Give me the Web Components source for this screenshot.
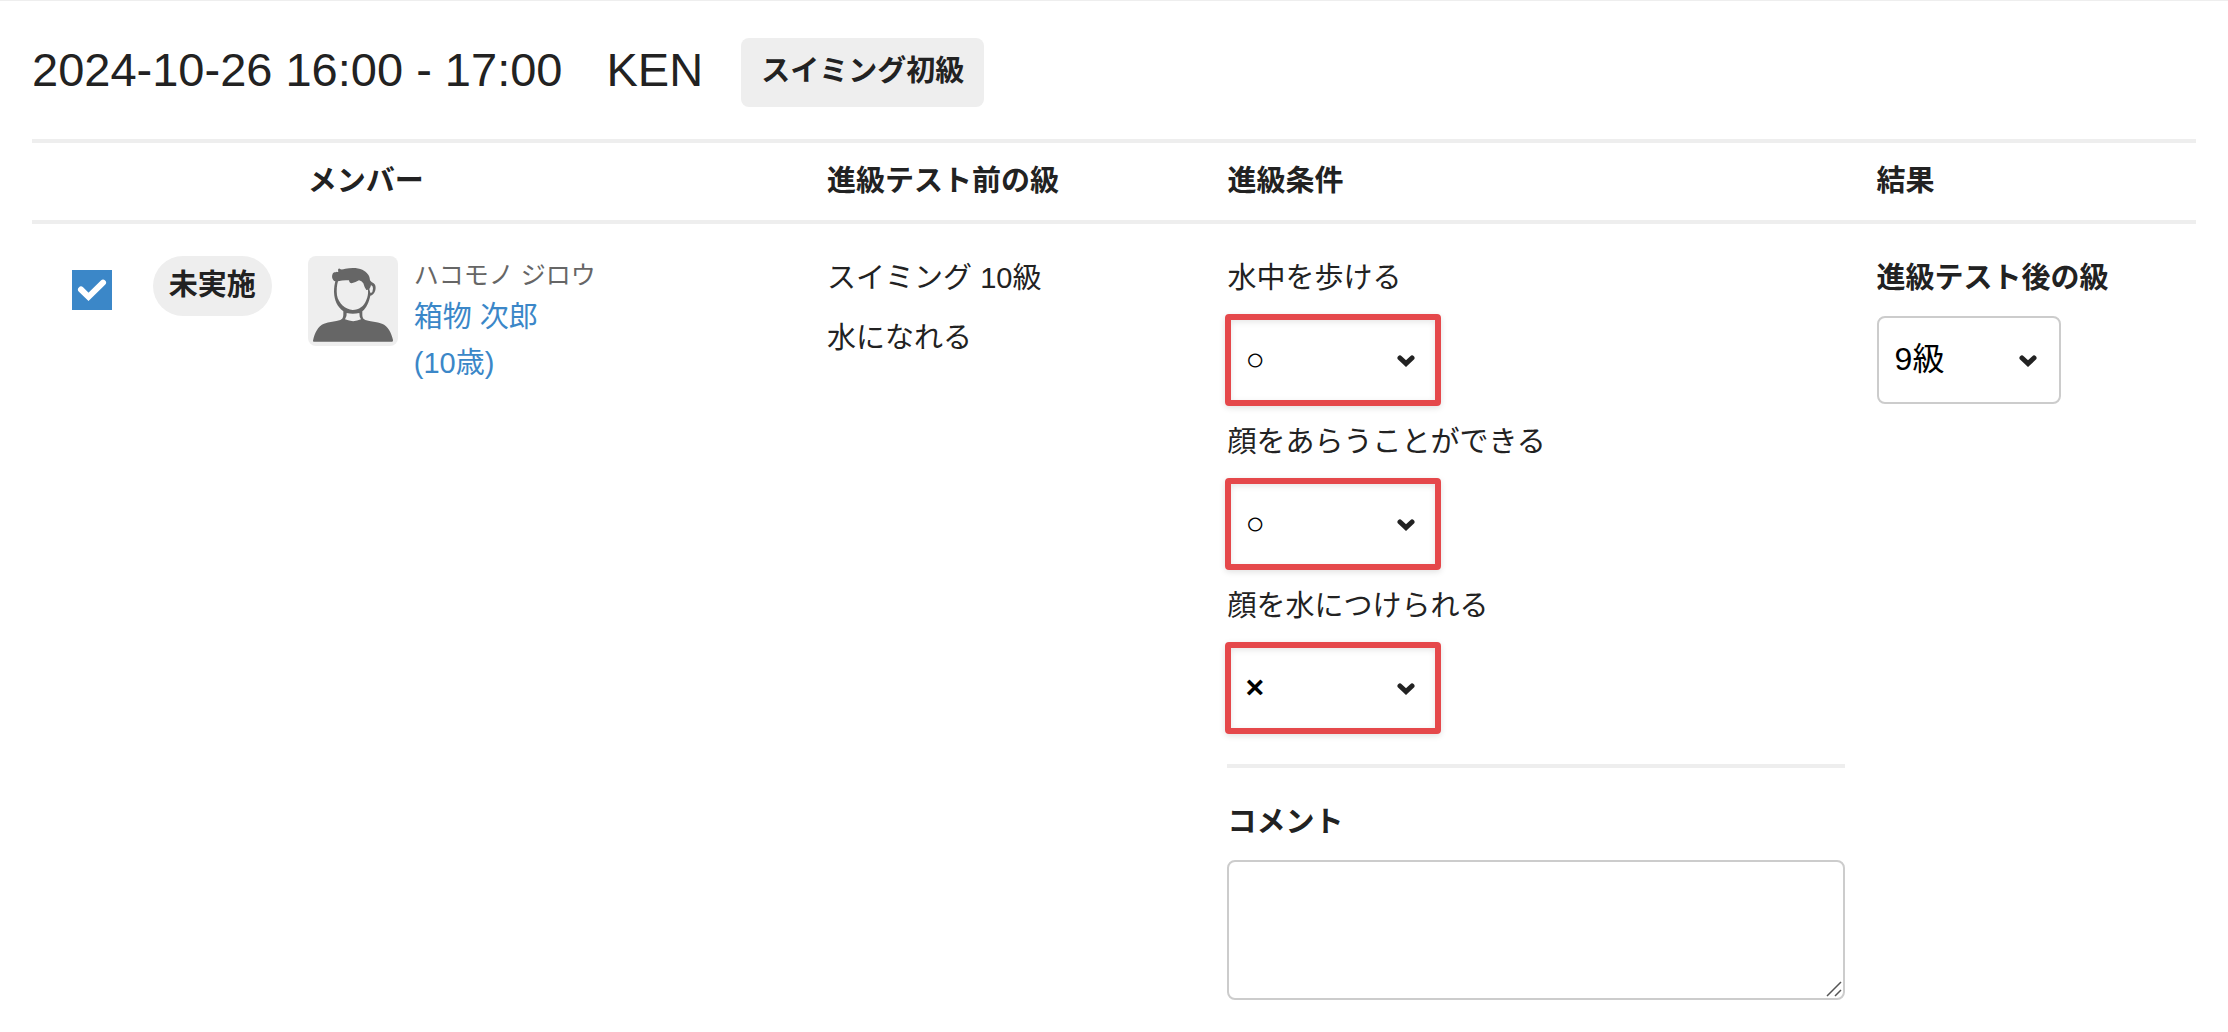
<!DOCTYPE html>
<html lang="ja">
<head>
<meta charset="utf-8">
<meta name="viewport" content="width=device-width, initial-scale=1">
<title>進級テスト</title>
<style>
  body {
    margin: 0;
    background: #fff;
    color: #222;
    font-family: "Liberation Sans", "Noto Sans CJK JP", sans-serif;
    font-size: 29px;
    line-height: 44px;
  }
</style>
</head>
<body>
<grading-page></grading-page>

<script>
const define = (name, html, setup) => {
  const template = document.createElement('template');
  template.innerHTML = html;
  customElements.define(name, class extends HTMLElement {
    constructor() {
      super();
      this.attachShadow({ mode: 'open' }).append(template.content.cloneNode(true));
    }
    connectedCallback() {
      if (setup) setup(this, this.shadowRoot);
    }
  });
};

define('lesson-heading', `
  <style>
    :host { display: flex; align-items: flex-start; gap: 38px; }
    h1 { display: flex; gap: 44px; margin: 0; font-size: 47px; line-height: 64px; font-weight: 400; }
    .class { padding: 11px 20px 14px; border-radius: 8px; background: #eee; font-weight: 700; }
  </style>
  <h1><slot name="time"></slot><slot name="coach"></slot></h1>
  <div class="class"><slot></slot></div>
`);

define('status-pill', `
  <style>
    :host { display: inline-block; padding: 7px 16px 9px; border-radius: 30px; background: #eee; font-weight: 700; white-space: nowrap; }
  </style>
  <slot></slot>
`);

define('row-check', `
  <style>
    :host { display: grid; width: 40px; height: 40px; }
    input, svg { grid-area: 1 / 1; width: 40px; height: 40px; margin: 0; }
    input { appearance: none; border: 2px solid #ccc; background: #fff; }
    input:checked { border-color: #3b87c8; background: #3b87c8; }
    svg { pointer-events: none; visibility: hidden; }
    input:checked + svg { visibility: visible; }
  </style>
  <input type="checkbox" checked aria-label="選択">
  <svg viewBox="0 0 40 40" fill="none" stroke="#fff" stroke-width="6" stroke-linecap="round"><path d="M9 19.500 L16.500 26.800 L31 12.700"/></svg>
`);

define('member-avatar', `
  <style>
    :host { display: block; flex: none; width: 90px; height: 90px; border-radius: 8px; background: #eee; overflow: hidden; }
    svg { display: block; width: 100%; height: 100%; }
  </style>
  <svg viewBox="0 0 270 270" role="img" aria-label="会員写真">
    <path fill="#666" d="M15 254 C20 230 30 210 48 203 C63 197 82 197 97 192 C107 188 106 180 106 166 C88 152 79 134 78 108 C78 94 80 84 82 76 C73 73 70 62 74 53 C78 46 86 49 91 47 C89 41 91 37 95 38 C99 42 105 40 112 38 C130 35 150 35 163 41 C177 48 186 59 186 73 C190 78 191 79 197 82 C204 87 204 98 201 106 C198 114 193 118 187 119 C183 138 176 155 163 166 C163 180 162 188 172 192 C187 197 207 197 222 203 C240 210 250 230 255 252 Q256 257 252 257 L18 257 Q14 257 15 254 Z"/>
    <path fill="#eee" d="M90 76 Q108 71 123 73 Q124 82 131 82 Q143 79 153 73 Q161 74 166 82 Q169 94 175 102 Q178 101 180 101 C181 114 179 122 175 132 C168 151 153 162 134 162 C112 161 91 142 87 118 C85 101 87 86 90 76 Z"/>
    <path fill="#eee" d="M184 99 Q188 94 189 87 Q196 90 195 98 Q195 108 188 112 Q185 106 184 99 Z"/>
    <path fill="#eee" d="M116 171 Q134 175 154 171 Q154 183 159 190 Q136 201 111 190 Q117 182 116 171 Z"/>
  </svg>
`);

define('member-card', `
  <style>
    :host { display: flex; align-items: flex-start; gap: 16px; }
    .kana { color: #666; font-size: 25px; line-height: 38px; }
    a { display: block; color: #3b87c8; line-height: 46px; text-decoration: none; }
    a:hover { text-decoration: underline; }
  </style>
  <member-avatar></member-avatar>
  <div>
    <div class="kana"><slot name="kana"></slot></div>
    <a href="#member"><slot name="name"></slot><br><slot name="age"></slot></a>
  </div>
`);

define('select-box', `
  <style>
    :host { display: grid; position: relative; width: 212px; color: #000; font-size: 32px; }
    :host([size="small"]) { width: 184px; }
    select, svg { grid-area: 1 / 1; }
    select {
      appearance: none; box-sizing: border-box; width: 100%; height: 88px; margin: 0; padding: 0 64px 2px 16px;
      border: 2px solid #ccc; border-radius: 8px; background: #fff; color: inherit; font: inherit;
    }
    :host([value="×"]) select { font-weight: 700; }
    svg { align-self: center; justify-self: end; width: 18px; height: 12px; margin-right: 24px; margin-top: 2px; pointer-events: none; }
    .mark { display: none; position: absolute; inset: -2px; border: 6px solid #e5484b; border-radius: 4px; box-shadow: 0 2px 6px rgba(0,0,0,.12), inset 0 2px 6px rgba(0,0,0,.1); pointer-events: none; }
    :host([marked]) .mark { display: block; }
  </style>
  <select></select>
  <svg viewBox="0 0 18 12" fill="none" stroke="#222" stroke-width="5" stroke-linecap="round"><path d="M3 3 L9 8.500 L15 3"/></svg>
  <div class="mark"></div>
`, (host, root) => {
  const select = root.querySelector('select');
  select.setAttribute('aria-label', host.getAttribute('label'));
  select.replaceChildren(new Option(host.getAttribute('value')));
});

define('form-item', `
  <style>
    :host { display: flex; flex-direction: column; gap: 16px; }
    :host([strong]) .label { font-weight: 700; }
  </style>
  <div class="label"><slot name="label"></slot></div>
  <slot></slot>
`);

define('comment-box', `
  <style>
    :host { display: flex; flex-direction: column; gap: 16px; }
    label { font-weight: 700; }
    .field { display: grid; }
    textarea, svg { grid-area: 1 / 1; }
    textarea {
      box-sizing: border-box; width: 100%; height: 140px; margin: 0; padding: 16px;
      border: 2px solid #ccc; border-radius: 8px; background: #fff; color: #000; font: inherit; resize: vertical;
    }
    textarea::-webkit-resizer { background: transparent; }
    svg { align-self: end; justify-self: end; width: 16px; height: 16px; margin: 3px; pointer-events: none; }
  </style>
  <label for="comment"><slot></slot></label>
  <div class="field">
    <textarea id="comment"></textarea>
    <svg viewBox="0 0 16 16" fill="none" stroke="#555" stroke-width="1.500"><path d="M1 15 L15 1 M9 15 L15 9"/></svg>
  </div>
`);

define('grading-table', `
  <style>
    :host { display: block; }
    table { width: 100%; table-layout: fixed; border-collapse: separate; border-spacing: 0; }
    .status { width: 155px; }
    .member { width: 24%; }
    .before { width: 18.5%; }
    .terms { width: 30%; }
    .result { width: 15.5%; }
    th { padding: 16px 16px 17px; border: solid #eee; border-width: 4px 0; text-align: left; font-weight: 700; }
    td { padding: 32px 16px; vertical-align: top; }
    td.pick { padding: 46px 0 0 40px; }
    .stack { display: flex; flex-direction: column; gap: 16px; }
    hr { height: 4px; margin: 32px 0; border: 0; background: #eee; }
  </style>
  <table>
    <colgroup><col><col class="status"><col class="member"><col class="before"><col class="terms"><col class="result"></colgroup>
    <thead>
      <tr><th></th><th></th><th>メンバー</th><th>進級テスト前の級</th><th>進級条件</th><th>結果</th></tr>
    </thead>
    <tbody>
      <tr>
        <td class="pick"><row-check></row-check></td>
        <td><status-pill>未実施</status-pill></td>
        <td>
          <member-card>
            <span slot="kana">ハコモノ ジロウ</span>
            <span slot="name">箱物 次郎</span>
            <span slot="age">(10歳)</span>
          </member-card>
        </td>
        <td><div class="stack"><div>スイミング 10級</div><div>水になれる</div></div></td>
        <td>
          <div class="stack">
            <form-item><span slot="label">水中を歩ける</span><select-box marked value="○" label="水中を歩ける"></select-box></form-item>
            <form-item><span slot="label">顔をあらうことができる</span><select-box marked value="○" label="顔をあらうことができる"></select-box></form-item>
            <form-item><span slot="label">顔を水につけられる</span><select-box marked value="×" label="顔を水につけられる"></select-box></form-item>
          </div>
          <hr>
          <comment-box>コメント</comment-box>
        </td>
        <td><form-item strong><span slot="label">進級テスト後の級</span><select-box size="small" value="9級" label="進級テスト後の級"></select-box></form-item></td>
      </tr>
    </tbody>
  </table>
`);

define('grading-page', `
  <style>
    :host { display: flex; flex-direction: column; gap: 32px; padding: 37px 32px 0; border-top: 1px solid #eee; }
  </style>
  <lesson-heading>
    <span slot="time">2024-10-26 16:00 - 17:00</span>
    <span slot="coach">KEN</span>
    スイミング初級
  </lesson-heading>
  <grading-table></grading-table>
`);
</script>
</body>
</html>
